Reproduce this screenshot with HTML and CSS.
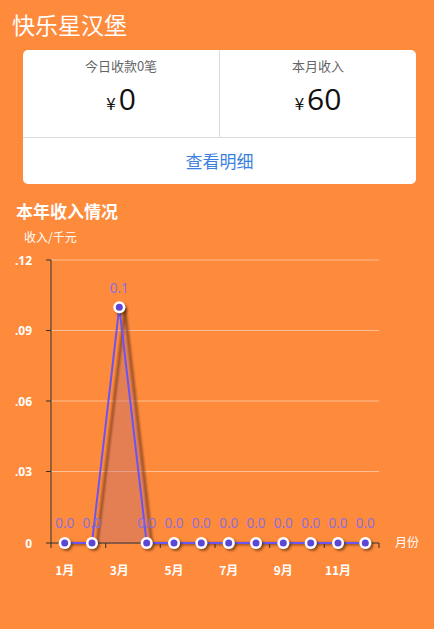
FILE: index.html
```html
<!DOCTYPE html>
<html lang="zh">
<head>
<meta charset="utf-8">
<link rel="stylesheet" href="styles.css">
</head>
<body>
<header class="top">
  <h1 class="shop">快乐星汉堡</h1>
</header>
<section class="card">
  <div class="stats">
    <div class="stat">
      <div class="stat-label">今日收款0笔</div>
      <div class="stat-value"><span class="yen">¥</span>0</div>
    </div>
    <div class="stat">
      <div class="stat-label">本月收入</div>
      <div class="stat-value"><span class="yen">¥</span>60</div>
    </div>
  </div>
  <div class="detail">查看明细</div>
</section>
<section class="chart-sec">
  <h2 class="chart-title">本年收入情况</h2>
  <div class="unit">收入/千元</div>
  <svg class="chart" width="434" height="384" viewBox="0 245 434 384" xmlns="http://www.w3.org/2000/svg">
    <defs>
      <filter id="blur" x="-20%" y="-20%" width="140%" height="140%">
        <feGaussianBlur stdDeviation="1"/>
      </filter>
      <filter id="dot" x="-50%" y="-50%" width="220%" height="220%">
        <feDropShadow dx="2" dy="2" stdDeviation="1.2" flood-color="#3a1a00" flood-opacity="0.55"/>
      </filter>
    </defs>
    <g class="grid">
      <line x1="51" y1="260" x2="379" y2="260"/>
      <line x1="51" y1="330.5" x2="379" y2="330.5"/>
      <line x1="51" y1="401" x2="379" y2="401"/>
      <line x1="51" y1="471.5" x2="379" y2="471.5"/>
    </g>
    <g class="ylab">
      <text x="32" y="264.5">.12</text>
      <text x="32" y="335">.09</text>
      <text x="32" y="405.5">.06</text>
      <text x="32" y="476">.03</text>
      <text x="32" y="547.5">0</text>
    </g>
    <polygon class="area" points="97,544 125,308 152,544"/>
    <polyline class="shadow" filter="url(#blur)" points="70,544 97,544 125,309 152,544 371,544"/>
    <g class="axis">
      <line x1="51" y1="260" x2="51" y2="543.5"/>
      <line x1="46" y1="260" x2="51" y2="260"/>
      <line x1="46" y1="330.5" x2="51" y2="330.5"/>
      <line x1="46" y1="401" x2="51" y2="401"/>
      <line x1="46" y1="471.5" x2="51" y2="471.5"/>
      <line x1="46" y1="543" x2="51" y2="543"/>
      <line x1="51" y1="543" x2="379" y2="543"/>
      <line x1="51" y1="543" x2="51" y2="548"/>
      <line x1="105.7" y1="543" x2="105.7" y2="548"/>
      <line x1="160.3" y1="543" x2="160.3" y2="548"/>
      <line x1="215" y1="543" x2="215" y2="548"/>
      <line x1="269.7" y1="543" x2="269.7" y2="548"/>
      <line x1="324.3" y1="543" x2="324.3" y2="548"/>
      <line x1="379" y1="543" x2="379" y2="548"/>
    </g>
    <polyline class="line" points="64.7,543 92,543 119.3,307.2 146.7,543 174,543 201.3,543 228.7,543 256,543 283.3,543 310.7,543 338,543 365.3,543"/>
    <g class="dots" filter="url(#dot)">
      <circle cx="64.7" cy="543" r="6"/>
      <circle cx="92" cy="543" r="6"/>
      <circle cx="119.3" cy="307.2" r="6"/>
      <circle cx="146.7" cy="543" r="6"/>
      <circle cx="174" cy="543" r="6"/>
      <circle cx="201.3" cy="543" r="6"/>
      <circle cx="228.7" cy="543" r="6"/>
      <circle cx="256" cy="543" r="6"/>
      <circle cx="283.3" cy="543" r="6"/>
      <circle cx="310.7" cy="543" r="6"/>
      <circle cx="338" cy="543" r="6"/>
      <circle cx="365.3" cy="543" r="6"/>
    </g>
    <g class="dots-in">
      <circle cx="64.7" cy="543" r="3.5"/>
      <circle cx="92" cy="543" r="3.5"/>
      <circle cx="119.3" cy="307.2" r="3.5"/>
      <circle cx="146.7" cy="543" r="3.5"/>
      <circle cx="174" cy="543" r="3.5"/>
      <circle cx="201.3" cy="543" r="3.5"/>
      <circle cx="228.7" cy="543" r="3.5"/>
      <circle cx="256" cy="543" r="3.5"/>
      <circle cx="283.3" cy="543" r="3.5"/>
      <circle cx="310.7" cy="543" r="3.5"/>
      <circle cx="338" cy="543" r="3.5"/>
      <circle cx="365.3" cy="543" r="3.5"/>
    </g>
    <g class="vlab">
      <text x="64.7" y="528">0.0</text>
      <text x="92" y="528">0.0</text>
      <text x="119.3" y="292.5">0.1</text>
      <text x="146.7" y="528">0.0</text>
      <text x="174" y="528">0.0</text>
      <text x="201.3" y="528">0.0</text>
      <text x="228.7" y="528">0.0</text>
      <text x="256" y="528">0.0</text>
      <text x="283.3" y="528">0.0</text>
      <text x="310.7" y="528">0.0</text>
      <text x="338" y="528">0.0</text>
      <text x="365.3" y="528">0.0</text>
    </g>
    <g class="xlab">
      <text x="64.7" y="575">1月</text>
      <text x="119.3" y="575">3月</text>
      <text x="174" y="575">5月</text>
      <text x="228.7" y="575">7月</text>
      <text x="283.3" y="575">9月</text>
      <text x="338" y="575">11月</text>
    </g>
    <text class="xname" x="395" y="547">月份</text>
  </svg>
</section>
</body>
</html>
```
FILE: styles.css
```css
html, body {
  margin: 0;
  padding: 0;
}
body {
  background: #fe8a3c;
  font-family: "Noto Sans CJK SC", "Noto Sans", sans-serif;
  width: 434px;
  height: 629px;
  overflow: hidden;
}
.top {
  padding: 10px 12px 0;
}
.shop {
  margin: 0;
  font-size: 23px;
  line-height: 28px;
  font-weight: 400;
  color: #fff;
}
.card {
  margin: 12px 0 0 23px;
  width: 393px;
  background: #fff;
  border-radius: 5px;
  overflow: hidden;
}
.stats {
  display: flex;
  height: 87px;
  border-bottom: 1px solid #dcdcdc;
}
.stat {
  flex: 1;
  text-align: center;
  padding-top: 7px;
}
.stat + .stat {
  border-left: 1px solid #dcdcdc;
}
.stat-label {
  font-size: 13px;
  line-height: 18px;
  color: #666;
}
.stat-value {
  font-family: "Open Sans", "Noto Sans", sans-serif;
  font-size: 30px;
  line-height: 36px;
  margin-top: 6px;
  color: #111;
}
.yen {
  font-size: 17px;
  margin-right: 3px;
  font-family: "Noto Sans CJK SC", sans-serif;
}
.detail {
  height: 46px;
  line-height: 46px;
  text-align: center;
  font-size: 17px;
  color: #3b7fe0;
}
.chart-sec {
  margin-top: 15px;
}
.chart-title {
  margin: 0 0 0 16px;
  font-size: 17px;
  line-height: 24px;
  font-weight: 700;
  color: #fff;
}
.unit {
  margin: 6px 0 0 24px;
  font-size: 12px;
  line-height: 16px;
  color: #fff;
}
.chart {
  display: block;
}
.grid line {
  stroke: rgba(255, 255, 255, 0.45);
  stroke-width: 1;
}
.axis line {
  stroke: #333;
  stroke-width: 1;
}
.ylab text {
  fill: #fff;
  font-size: 12px;
  font-weight: 700;
  text-anchor: end;
  font-family: "Noto Sans", sans-serif;
}
.area {
  fill: rgba(190, 110, 120, 0.4);
}
.shadow {
  fill: none;
  stroke: rgba(70, 30, 10, 0.55);
  stroke-width: 2.5;
}
.line {
  fill: none;
  stroke: #6a55f2;
  stroke-width: 2;
  stroke-linejoin: round;
}
.dots circle {
  fill: #fff;
}
.dots-in circle {
  fill: #5b46d6;
}
.vlab text {
  fill: #8d6fdc;
  font-size: 13.5px;
  text-anchor: middle;
  font-family: "Noto Sans", sans-serif;
}
.xlab text {
  fill: #fff;
  font-size: 12px;
  font-weight: 700;
  text-anchor: middle;
}
.xname {
  fill: #fff;
  font-size: 12px;
}
```
